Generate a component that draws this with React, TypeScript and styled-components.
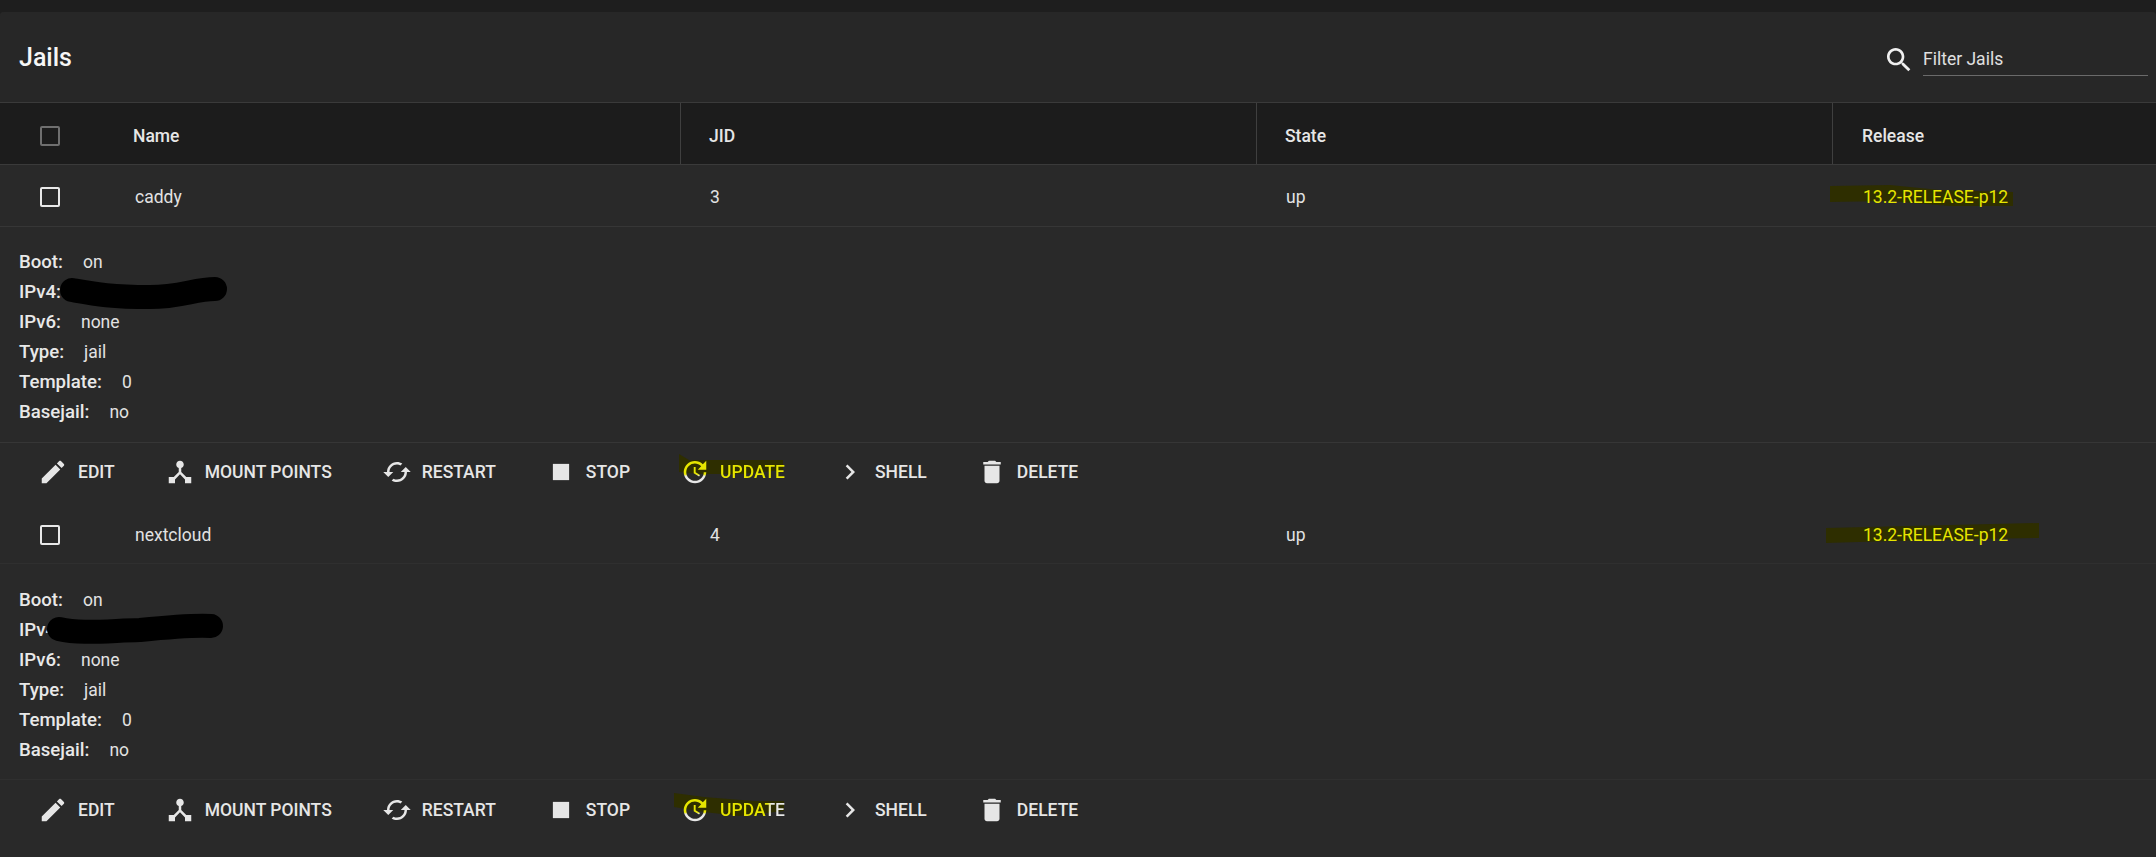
import React from 'react';
import styled, { createGlobalStyle } from 'styled-components';

const Global = createGlobalStyle`
  html, body { margin: 0; padding: 0; background: #1e1e1e; overflow: hidden; }
  body { font-family: Roboto, "Liberation Sans", sans-serif; color: #e6e6e6; }
`;

const Page = styled.div`
  width: 2156px;
  height: 857px;
  padding-top: 12px;
  box-sizing: border-box;
`;

const Card = styled.section`
  height: 845px;
  background: #292929;
  border-radius: 4px 4px 0 0;
  overflow: hidden;
`;

const TitleBar = styled.header`
  height: 91px;
  box-sizing: border-box;
  background: #272727;
  border-bottom: 1px solid #3a3a3a;
  display: flex;
  align-items: center;
  justify-content: space-between;
  padding: 0 8px 0 19px;
`;

const Title = styled.h1`
  margin: 1px 0 0;
  font-size: 25px;
  font-weight: 500;
  color: #f6f6f6;
`;

const Search = styled.div`
  display: flex;
  align-items: center;
  gap: 8px;
  padding-top: 6px;
`;

const Filter = styled.div`
  width: 225px;
  height: 32px;
  box-sizing: border-box;
  border-bottom: 1px solid #6a6a6a;
  font-size: 17.5px;
  line-height: 30px;
  color: #e0e0e0;
`;

const columns = '133px 547px 576px 576px 1fr';

const HeadRow = styled.div`
  display: grid;
  grid-template-columns: ${columns};
  height: 62px;
  box-sizing: border-box;
  background: #1c1c1c;
  border-bottom: 1px solid #3a3a3a;
  font-weight: 500;
  font-size: 17.5px;
  color: #e6e6e6;
`;

const HeadCell = styled.div<{ $sep?: boolean; $pad: number }>`
  display: flex;
  align-items: center;
  padding: 5px 0 0 ${p => p.$pad}px;
  border-left: ${p => (p.$sep ? '1px solid #3f3f3f' : 'none')};
`;

const BodyRow = styled.div<{ $faint?: boolean; $height: number }>`
  display: grid;
  grid-template-columns: ${columns};
  height: ${p => p.$height}px;
  box-sizing: border-box;
  border-bottom: 1px solid ${p => (p.$faint ? '#2f2f2f' : '#363636')};
  font-size: 17.5px;
  color: #e2e2e2;
`;

const BodyCell = styled.div<{ $pad: number }>`
  position: relative;
  display: flex;
  align-items: center;
  padding: 3px 0 0 ${p => p.$pad}px;
`;

const Check = styled.span<{ $dim?: boolean }>`
  display: block;
  width: 20px;
  height: 20px;
  box-sizing: border-box;
  border: 2px solid ${p => (p.$dim ? '#6f6f6f' : '#e8e8e8')};
  border-radius: 2px;
`;

const Release = styled.span`
  position: relative;
  color: #e6e600;
`;

const Details = styled.div<{ $faint?: boolean; $top: number }>`
  position: relative;
  height: 216px;
  box-sizing: border-box;
  padding: ${p => p.$top}px 19px 0;
  border-bottom: 1px solid ${p => (p.$faint ? '#2f2f2f' : '#363636')};
`;

const Line = styled.div`
  display: flex;
  height: 30px;
  align-items: center;
  font-size: 17.5px;
  gap: 20px;
  color: #e2e2e2;
`;

const Label = styled.span`
  font-size: 18.6px;
  font-weight: 500;
  color: #e8e8e8;
`;

const Actions = styled.div<{ $height: number; $lift: number }>`
  height: ${p => p.$height}px;
  box-sizing: border-box;
  display: flex;
  align-items: center;
  gap: 50px;
  padding: 0 0 ${p => p.$lift}px 38px;
`;

const Action = styled.div`
  position: relative;
  display: flex;
  align-items: center;
  gap: 10px;
  font-size: 17.5px;
  font-weight: 500;
  text-transform: uppercase;
  color: #e6e6e6;
`;

const ActionLabel = styled.span<{ $fade?: string }>`
  position: relative;
  ${p =>
    p.$fade
      ? `background: ${p.$fade}; -webkit-background-clip: text; background-clip: text; color: transparent;`
      : ''}
`;

const Stain = styled.svg<{ $left: number; $top: number }>`
  position: absolute;
  left: ${p => p.$left}px;
  top: ${p => p.$top}px;
  overflow: visible;
  pointer-events: none;
`;

const Glyph = styled.svg`
  position: relative;
  width: 30px;
  height: 30px;
  flex: none;
  display: block;
`;

const SearchGlyph = styled.svg`
  width: 32px;
  height: 32px;
  display: block;
`;

const paths = {
  edit: 'M3 17.25V21h3.75L17.81 9.94l-3.75-3.75L3 17.25zM20.71 7.04c.39-.39.39-1.02 0-1.41l-2.34-2.34c-.39-.39-1.02-.39-1.41 0l-1.83 1.83 3.75 3.75 1.83-1.83z',
  mount: 'M17 16l-4-4V8.82C14.16 8.4 15 7.3 15 6c0-1.66-1.34-3-3-3S9 4.34 9 6c0 1.3.84 2.4 2 2.82V12l-4 4H3v5h5v-3.05l4-4.2 4 4.2V21h5v-5h-4z',
  restart: 'M19 8l-4 4h3c0 3.31-2.69 6-6 6-1.01 0-1.97-.25-2.8-.7l-1.46 1.46C8.97 19.54 10.43 20 12 20c4.42 0 8-3.58 8-8h3l-4-4zM6 12c0-3.31 2.69-6 6-6 1.01 0 1.97.25 2.8.7l1.46-1.46C15.03 4.46 13.57 4 12 4c-4.42 0-8 3.58-8 8H1l4 4 4-4H6z',
  stop: 'M5.5 5.5h13v13h-13z',
  update: 'M21 10.12h-6.78l2.74-2.82c-2.73-2.7-7.15-2.8-9.88-.1-2.73 2.71-2.73 7.08 0 9.79s7.15 2.71 9.88 0C18.32 15.65 19 14.08 19 12.1h2c0 1.98-.88 4.55-2.64 6.29-3.51 3.48-9.21 3.48-12.72 0-3.5-3.47-3.53-9.11-.02-12.58s9.14-3.47 12.65 0L21 3v7.12zM12.5 8v4.25l3.5 2.08-.72 1.21L11 13V8h1.5z',
  shell: 'M10 6L8.59 7.41 13.17 12l-4.58 4.59L10 18l6-6z',
  delete: 'M6 19c0 1.1.9 2 2 2h8c1.1 0 2-.9 2-2V7H6v12zM19 4h-3.5l-1-1h-5l-1 1H5v2h14V4z',
};

type ActionName = keyof typeof paths;
const actionList: { name: ActionName; label: string }[] = [
  { name: 'edit', label: 'Edit' },
  { name: 'mount', label: 'Mount Points' },
  { name: 'restart', label: 'Restart' },
  { name: 'stop', label: 'Stop' },
  { name: 'update', label: 'Update' },
  { name: 'shell', label: 'Shell' },
  { name: 'delete', label: 'Delete' },
];

const STAIN = '#2e2e00';

interface JailData {
  id: string;
  name: string;
  jid: string;
  rowHeight: number;
  actionsHeight: number;
  lift: number;
  detailsTop: number;
  faint?: boolean;
  releaseStain: { left: number; top: number; d: string };
  ipD: string;
  updateStain: { left: number; top: number; d: string };
  updateFade: string;
}

const jails: JailData[] = [
  {
    id: 'a',
    name: 'caddy',
    jid: '3',
    rowHeight: 62,
    actionsHeight: 60,
    lift: 3,
    detailsTop: 20,
    releaseStain: {
      left: -33,
      top: 0,
      d: 'M0 -1 L60 -2 L110 3 L183 5 L183 19 L120 19 L60 14 L0 15 Z',
    },
    ipD: 'M72 33 C95 37 110 40 150 40 C180 40 195 32 215 32',
    updateStain: { left: -1, top: -3, d: 'M0 0 L10 6 L104 6 L104 16 L60 20 L22 20 L0 18 Z' },
    updateFade: 'linear-gradient(180deg, #e6e600 0 78%, #e8e8e8 88%)',
  },
  {
    id: 'b',
    name: 'nextcloud',
    jid: '4',
    rowHeight: 61,
    actionsHeight: 60,
    lift: 0,
    detailsTop: 21,
    faint: true,
    releaseStain: {
      left: -37,
      top: 0,
      d: 'M0 3 L213 -2 L213 13 L100 15 L0 18 Z',
    },
    ipD: 'M59 35 C80 40 105 37 140 36 C170 33 195 31 211 32',
    updateStain: { left: -6, top: -2, d: 'M0 0 L30 4 L80 8 L110 8 L110 18 L65 23 L30 19 L0 14 Z' },
    updateFade: 'linear-gradient(100deg, #e6e600 0 70%, #e8e8e8 76%)',
  },
];

const Jail = ({ jail }: { jail: JailData }) => (
  <>
    <BodyRow $height={jail.rowHeight} $faint={jail.faint}>
      <BodyCell $pad={40}>
        <Check />
      </BodyCell>
      <BodyCell $pad={2}>{jail.name}</BodyCell>
      <BodyCell $pad={30}>{jail.jid}</BodyCell>
      <BodyCell $pad={30}>up</BodyCell>
      <BodyCell $pad={31}>
        <Release>
          <Stain $left={jail.releaseStain.left} $top={jail.releaseStain.top} width="220" height="24">
            <path d={jail.releaseStain.d} fill={STAIN} />
          </Stain>
          <ActionLabel>13.2-RELEASE-p12</ActionLabel>
        </Release>
      </BodyCell>
    </BodyRow>
    <Details $faint={jail.faint} $top={jail.detailsTop}>
      <Stain $left={0} $top={0} width="240" height="90">
        <path d={jail.ipD} transform="translate(0 30)" fill="none" stroke="#000" strokeWidth="24" strokeLinecap="round" />
      </Stain>
      <Line><Label>Boot:</Label>on</Line>
      <Line><Label>IPv4:</Label></Line>
      <Line><Label>IPv6:</Label>none</Line>
      <Line><Label>Type:</Label>jail</Line>
      <Line><Label>Template:</Label>0</Line>
      <Line><Label>Basejail:</Label>no</Line>
    </Details>
    <Actions $height={jail.actionsHeight} $lift={jail.lift}>
      {actionList.map(a => (
        <Action key={a.name}>
          {a.name === 'update' && (
            <Stain $left={jail.updateStain.left} $top={jail.updateStain.top} width="120" height="32">
              <path d={jail.updateStain.d} fill={STAIN} />
            </Stain>
          )}
          <Glyph viewBox="0 0 24 24">
            {a.name === 'update' && (
              <defs>
                <linearGradient id={`fade-${jail.id}`} x1="0" y1="0" x2="0" y2="1">
                  <stop offset="0.6" stopColor="#e6e600" />
                  <stop offset="0.68" stopColor="#e8e8e8" />
                </linearGradient>
              </defs>
            )}
            <path d={paths[a.name]} fill={a.name === 'update' ? `url(#fade-${jail.id})` : '#e6e6e6'} />
          </Glyph>
          <ActionLabel $fade={a.name === 'update' ? jail.updateFade : undefined}>{a.label}</ActionLabel>
        </Action>
      ))}
    </Actions>
  </>
);

export default function App() {
  return (
    <Page>
      <Global />
      <Card>
        <TitleBar>
          <Title>Jails</Title>
          <Search>
            <SearchGlyph viewBox="0 0 24 24">
              <path
                fill="#f0f0f0"
                d="M15.5 14h-.79l-.28-.27C15.41 12.59 16 11.11 16 9.5 16 5.91 13.09 3 9.5 3S3 5.91 3 9.5 5.91 16 9.5 16c1.61 0 3.09-.59 4.23-1.57l.27.28v.79l5 4.99L20.49 19l-4.99-5zm-6 0C7.01 14 5 11.99 5 9.5S7.01 5 9.5 5 14 7.01 14 9.5 11.99 14 9.5 14z"
              />
            </SearchGlyph>
            <Filter>Filter Jails</Filter>
          </Search>
        </TitleBar>
        <HeadRow>
          <HeadCell $pad={40}><Check $dim /></HeadCell>
          <HeadCell $pad={0}>Name</HeadCell>
          <HeadCell $sep $pad={28}>JID</HeadCell>
          <HeadCell $sep $pad={28}>State</HeadCell>
          <HeadCell $sep $pad={29}>Release</HeadCell>
        </HeadRow>
        {jails.map(j => <Jail key={j.id} jail={j} />)}
      </Card>
    </Page>
  );
}
